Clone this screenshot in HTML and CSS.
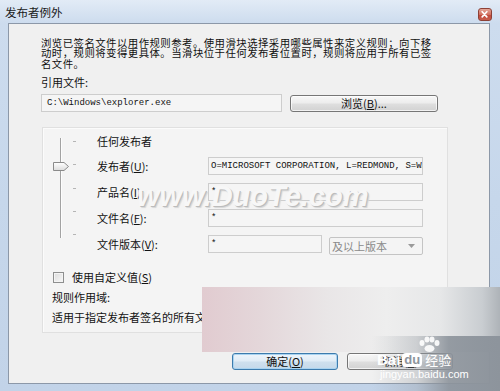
FILE: index.html
```html
<!DOCTYPE html>
<html lang="zh-CN">
<head>
<meta charset="utf-8">
<title>发布者例外</title>
<link rel="stylesheet" href="styles.css">
</head>
<body>
<div class="window">
  <div class="titlebar">
    <span class="title">发布者例外</span>
    <span class="close"><svg width="14" height="13" viewBox="0 0 14 13"><path d="M4.5 3.5 L9.5 9 M9.5 3.5 L4.5 9" stroke="#fff" stroke-width="1.8" stroke-linecap="round"/></svg></span>
  </div>
  <div class="frame">
    <div class="client">
      <p class="desc">浏览已签名文件以用作规则参考。使用滑块选择采用哪些属性来定义规则；向下移<br>动时，规则将变得更具体。当滑块位于任何发布者位置时，规则将应用于所有已签<br>名文件。</p>
      <div class="ref-label">引用文件:</div>
      <div class="path-row">
        <div class="textbox path">C:\Windows\explorer.exe</div>
        <button class="btn browse">浏览(<u>B</u>)...</button>
      </div>
      <div class="panel">
        <div class="props">
          <div class="slider">
            <div class="track-col"><div class="track"></div></div>
            <div class="ticks"><i></i><i></i><i></i><i></i><i></i></div>
            <svg class="thumb" width="18" height="11" viewBox="0 0 18 11"><defs><linearGradient id="tg" x1="0" y1="0" x2="0" y2="1"><stop offset="0" stop-color="#ffffff"/><stop offset="1" stop-color="#dcdcdc"/></linearGradient></defs><path d="M1.5 1.5 H12 L16.5 5.5 L12 9.5 H1.5 Z" fill="url(#tg)" stroke="#8a8a8a" stroke-width="1"/></svg>
          </div>
          <div class="rows">
            <div class="row-any">任何发布者</div>
            <div class="row"><span class="lbl">发布者(<u>U</u>):</span><div class="textbox field">O=MICROSOFT CORPORATION, L=REDMOND, S=WASHINGTON, C=US</div></div>
            <div class="row"><span class="lbl">产品名(<u>I</u>):</span><div class="textbox field">*</div></div>
            <div class="row"><span class="lbl">文件名(<u>F</u>):</span><div class="textbox field">*</div></div>
            <div class="row"><span class="lbl">文件版本(<u>V</u>):</span><div class="textbox field short">*</div><div class="combo"><span>及以上版本</span><svg width="7" height="4" viewBox="0 0 7 4"><path d="M0 0 H7 L3.5 4 Z" fill="#9a9a9a"/></svg></div></div>
          </div>
        </div>
        <div class="check-row"><span class="checkbox"></span><span>使用自定义值(<u>S</u>)</span></div>
        <div class="scope-label">规则作用域:</div>
        <div class="scope-text">适用于指定发布者签名的所有文件。</div>
      </div>
      <div class="buttons">
        <button class="btn ok">确定(<u>O</u>)</button>
        <button class="btn">取消(<u>C</u>)</button>
      </div>
    </div>
  </div>
</div>
<div class="wm-duote">www.DuoTe.com</div>
<div class="wm-pink"></div>
<div class="wm-baidu">
  <svg class="paw" width="24" height="16" viewBox="0 0 24 16"><g fill="#fff" opacity="0.9"><ellipse cx="5" cy="7" rx="2.5" ry="3"/><ellipse cx="10" cy="3.5" rx="2.5" ry="3"/><ellipse cx="15" cy="3.5" rx="2.5" ry="3"/><ellipse cx="20" cy="7" rx="2.5" ry="3"/><ellipse cx="12.5" cy="12.5" rx="5" ry="3.5"/></g></svg>
  <div class="bd-line"><span class="bd-bai">Bai</span><span class="bd-du">du</span><span class="bd-jy">经验</span></div>
  <div class="bd-url">jingyan.baidu.com</div>
</div>
</body>
</html>
```

FILE: styles.css
```css
* { box-sizing: border-box; }

body {
  margin: 0;
  width: 500px;
  height: 391px;
  overflow: hidden;
  position: relative;
  font-family: "Noto Sans CJK SC", "Liberation Sans", sans-serif;
  font-size: 11px;
  color: #111;
}

u { text-decoration: underline; text-underline-offset: 1px; }

.window {
  display: flex;
  flex-direction: column;
  height: 391px;
  background: linear-gradient(#e2ebf6, #cddcee 23px, #c6d7eb 200px, #c2d3e8);
}

.titlebar {
  height: 23px;
  display: flex;
  justify-content: space-between;
  align-items: flex-start;
  padding: 0 8px 0 5px;
}

.title {
  font-size: 11.5px;
  line-height: 25px;
  color: #1a1a1a;
}

.close {
  margin-top: 8px;
  width: 14px;
  height: 13px;
  border: 1px solid #8d4035;
  border-radius: 3px;
  background: linear-gradient(#e5a799, #d2705f 50%, #c0483a 51%, #c85d4c);
  display: flex;
}
.close svg { margin: -1px 0 0 -1px; }

.frame {
  flex: 1;
  display: flex;
  padding: 0 10px 7px 8px;
}

.client {
  flex: 1;
  border: 1px solid #8c98a8;
  background: #f0f0f0;
  padding: 14px 0 0 32px;
  display: flex;
  flex-direction: column;
}

.desc {
  margin: 0;
  font-size: 10.4px;
  line-height: 10.4px;
  letter-spacing: 0.46px;
  white-space: nowrap;
}

.ref-label {
  margin-top: 8px;
  line-height: 10px;
}

.path-row {
  margin-top: 7px;
  display: flex;
  gap: 8px;
  height: 18px;
}

.textbox {
  height: 18px;
  border: 1px solid #cdcdcd;
  background: #f5f5f5;
  font-family: "Liberation Mono", monospace;
  font-size: 9px;
  line-height: 16px;
  padding-left: 2px;
  white-space: nowrap;
  overflow: hidden;
  color: #111;
}

.path { width: 241px; padding-left: 5px; }

.btn {
  height: 18px;
  border: 1px solid #767676;
  border-radius: 3px;
  background: linear-gradient(#f7f7f7, #ececec 48%, #dfdfdf 52%, #d2d2d2);
  font-family: "Noto Sans CJK SC", sans-serif;
  font-size: 11px;
  line-height: 15px;
  padding: 0;
  color: #111;
  box-shadow: inset 0 0 0 1px rgba(255,255,255,0.7);
}

.browse { width: 148px; margin-top: 1px; height: 17px; }

.panel {
  margin-top: 15px;
  margin-left: 1px;
  width: 406px;
  border: 1px solid #e0e0e0;
  background: #f4f4f4;
  box-shadow: inset 1px 1px 0 #fbfbfb;
  padding-bottom: 8px;
}

.props {
  display: flex;
  padding-top: 2px;
}

.slider {
  position: relative;
  width: 44px;
  height: 100px;
  margin: 8px 0 0 10px;
  display: flex;
  gap: 3px;
}

.track-col {
  width: 17px;
  padding-left: 7px;
}

.track {
  width: 2px;
  height: 100px;
  border-left: 1px solid #a3a3a3;
  border-right: 1px solid #fdfdfd;
}

.ticks {
  display: flex;
  flex-direction: column;
  justify-content: space-between;
  padding: 3px 0;
}
.ticks i {
  display: block;
  width: 3px;
  height: 1px;
  background: #b5b5b5;
}

.thumb {
  position: absolute;
  left: -1px;
  top: 23px;
}

.rows { flex: 1; }

.row-any {
  height: 23px;
  line-height: 23px;
}

.row {
  height: 26px;
  display: flex;
  align-items: center;
}

.lbl { width: 111px; white-space: nowrap; }

.field { width: 215px; }
.field.short { width: 114px; }

.combo {
  margin-left: 7px;
  margin-top: 3px;
  width: 94px;
  height: 18px;
  border: 1px solid #c4c4c4;
  border-radius: 2px;
  background: #f4f4f4;
  display: flex;
  align-items: center;
  justify-content: space-between;
  padding: 0 7px 0 2px;
  color: #8a8a8a;
  font-size: 11px;
}

.check-row {
  margin: 13px 0 0 10px;
  height: 14px;
  display: flex;
  align-items: center;
  gap: 8px;
}

.checkbox {
  width: 11px;
  height: 11px;
  border: 1px solid #8e8f8f;
  background: linear-gradient(135deg, #dcdcdc, #f8f8f8);
  box-shadow: inset 0 0 0 1px #f4f4f4;
}

.scope-label,
.scope-text {
  margin: 6px 0 0 9px;
  height: 14px;
  line-height: 14px;
  white-space: nowrap;
}

.buttons {
  margin-top: 20px;
  padding-left: 191px;
  display: flex;
  gap: 9px;
}
.buttons .btn { width: 106px; height: 17px; }

.btn.ok {
  border-color: #3d7bad;
  background: linear-gradient(#eef5fb, #e0ecf6 48%, #cfe0ee 52%, #c5d9ea);
  box-shadow: inset 0 0 0 1px #a9d3f0;
}

/* watermark overlays */
.wm-duote {
  position: absolute;
  left: 137px;
  top: 182px;
  font-family: "Liberation Sans", sans-serif;
  font-weight: bold;
  font-style: italic;
  font-size: 29px;
  line-height: 29px;
  color: #f7f7f7;
  text-shadow: 1px 1px 0 #bcbcbc, 2px 2px 1px #d6d6d6;
  white-space: nowrap;
}

.wm-pink {
  position: absolute;
  left: 202px;
  top: 287px;
  width: 298px;
  height: 65px;
  background: linear-gradient(90deg, #e1cbd0 0%, #e4d7da 20%, #e9e6e7 42%, #eeeeee 62%, #e6e7e8 80%, #c9cdd1 94%, #aeb3b8 100%);
}

.wm-baidu {
  position: absolute;
  left: 372px;
  top: 336px;
  width: 128px;
  height: 55px;
  background: linear-gradient(90deg, rgba(160,166,172,0) 0%, rgba(150,156,163,0.35) 35%, rgba(140,147,155,0.9) 60%, #8d949c 100%);
  padding-left: 5px;
}
.paw { margin-left: 40px; display: block; }
.bd-line {
  display: flex;
  align-items: center;
  height: 15px;
  color: #fff;
  font-family: "Liberation Sans", sans-serif;
  font-weight: bold;
  font-size: 15px;
}
.bd-du {
  margin-left: 2px;
  background: #fff;
  color: #8d949c;
  border-radius: 4px;
  padding: 0 2px;
  font-size: 13px;
  line-height: 14px;
}
.bd-jy {
  margin-left: 3px;
  font-family: "Noto Sans CJK SC", sans-serif;
  font-weight: normal;
  font-size: 13px;
}
.bd-url {
  margin: 1px 0 0 3px;
  color: #fff;
  font-family: "Liberation Sans", sans-serif;
  font-size: 11px;
  line-height: 12px;
}
```
